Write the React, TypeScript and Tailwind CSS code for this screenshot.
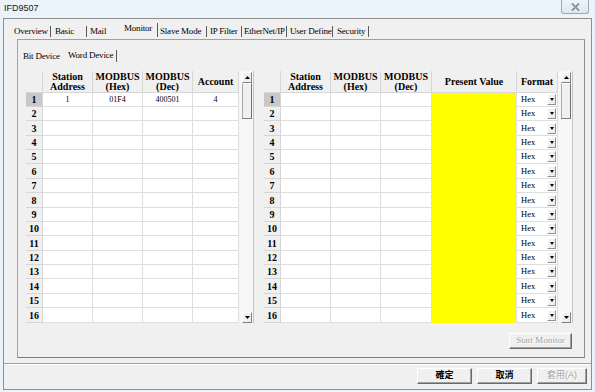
import React from 'react';

const serif = "font-['Liberation_Serif','Times_New_Roman',serif]";
const cjk = "font-['Liberation_Sans','Noto_Sans_CJK_TC',sans-serif]";

type Col = { label: string[]; w: string };

const leftCols: Col[] = [
  { label: ['Station', 'Address'], w: 'w-[50px]' },
  { label: ['MODBUS', '(Hex)'], w: 'w-[50px]' },
  { label: ['MODBUS', '(Dec)'], w: 'w-[50px]' },
  { label: ['Account'], w: 'w-[46px]' },
];

const rightCols: Col[] = [
  { label: ['Station', 'Address'], w: 'w-[50px]' },
  { label: ['MODBUS', '(Hex)'], w: 'w-[50px]' },
  { label: ['MODBUS', '(Dec)'], w: 'w-[51px]' },
  { label: ['Present Value'], w: 'w-[85px]' },
  { label: ['Format'], w: 'w-[41px]' },
];

// 16 rows spread over 230px: mix of 14px and 15px rows
const rows = Array.from({ length: 16 }, (_, i) => ({
  n: i + 1,
  tall: Math.floor((i + 1) * 14.375) - Math.floor(i * 14.375) === 15,
}));

const tabs = [
  { name: 'Overview', w: 'w-[41px]', mr: 'mr-[4px]' },
  { name: 'Basic', w: 'w-[35px]', mr: 'mr-[3px]' },
  { name: 'Mail', w: 'w-[34px]', mr: '' },
  { name: 'Monitor', w: 'w-[36px]', mr: 'mr-[2px]', active: true },
  { name: 'Slave Mode', w: 'w-[50px]', mr: 'mr-[3px]' },
  { name: 'IP Filter', w: 'w-[34px]', mr: 'mr-[2px]' },
  { name: 'EtherNet/IP', w: 'w-[46px]', mr: 'mr-[3px]' },
  { name: 'User Define', w: 'w-[47px]', mr: 'mr-[5px]' },
  { name: 'Security', w: 'w-[35px]', mr: 'mr-[3px]' },
];

function Tri({ down }: { down?: boolean }) {
  return (
    <svg width="5" height="3" viewBox="0 0 5 3">
      <polygon points={down ? '0,0 5,0 2.5,3' : '0,3 5,3 2.5,0'} fill="#000" />
    </svg>
  );
}

function ArrowBtn({ down }: { down?: boolean }) {
  return (
    <div className="w-[10px] h-[11px] bg-[#f0f0f0] border border-t-white border-l-white border-r-[#808080] border-b-[#808080] flex items-center justify-center">
      <Tri down={down} />
    </div>
  );
}

function ScrollBar() {
  return (
    <div className="w-[15px] h-full bg-[#f7f7f7] border-r border-[#c4c4c4] pl-[3px] pt-[1px] flex flex-col">
      <ArrowBtn />
      <div className="w-[10px] h-[36px] bg-[#f0f0f0] border border-t-white border-l-[#a8a8a8] border-r-[#707070] border-b-[#808080]" />
      <div className="flex-1" />
      <ArrowBtn down />
    </div>
  );
}

function Header({ cols }: { cols: Col[] }) {
  return (
    <div className="h-[22px] flex">
      <div className="w-[17px] bg-[#f0f0f0] border-r border-b border-[#d6d6d6]" />
      {cols.map((c, i) => (
        <div
          key={i}
          className={`${c.w} bg-[#f0f0f0] border-r border-b border-[#d6d6d6] flex flex-col items-center justify-center text-[10px] leading-[10px] font-bold text-black ${serif}`}
        >
          {c.label.map((l) => (
            <span key={l} className="whitespace-nowrap">
              {l}
            </span>
          ))}
        </div>
      ))}
    </div>
  );
}

function RowHead({ n }: { n: number }) {
  return (
    <div
      className={`w-[17px] h-full border-r border-b border-[#d6d6d6] flex items-center justify-center text-[10px] font-bold text-black ${serif} ${
        n === 1 ? 'bg-[#c8c8c8]' : 'bg-[#f0f0f0]'
      }`}
    >
      {n}
    </div>
  );
}

function LeftGrid() {
  const first = ['1', '01F4', '400501', '4'];
  return (
    <div className="flex h-[252px]">
      <div className="flex flex-col">
        <Header cols={leftCols} />
        {rows.map(({ n, tall }) => (
          <div key={n} className={`flex ${tall ? 'h-[15px]' : 'h-[14px]'}`}>
            <RowHead n={n} />
            {leftCols.map((c, i) => (
              <div
                key={i}
                className={`${c.w} bg-white border-r border-b border-[#dedede] flex items-center justify-center text-[8px] text-black ${serif}`}
              >
                {n === 1 ? first[i] : ''}
              </div>
            ))}
          </div>
        ))}
      </div>
      <ScrollBar />
    </div>
  );
}

function RightGrid() {
  return (
    <div className="flex h-[252px]">
      <div className="flex flex-col">
        <Header cols={rightCols} />
        {rows.map(({ n, tall }) => (
          <div key={n} className={`flex ${tall ? 'h-[15px]' : 'h-[14px]'}`}>
            <RowHead n={n} />
            <div className="w-[50px] bg-white border-r border-b border-[#dedede]" />
            <div className="w-[50px] bg-white border-r border-b border-[#dedede]" />
            <div className="w-[51px] bg-white border-r border-b border-[#dedede]" />
            <div className="w-[85px] bg-[#ffff00] border-r border-[#dedede]" />
            <div className={`w-[41px] bg-white border-r border-b border-[#dedede] flex items-center pl-[4px] text-[8.5px] text-black ${serif}`}>
              <span className="flex-1">Hex</span>
              <div className="w-[9px] h-[11px] mr-[1px] bg-[#f0f0f0] border border-t-white border-l-white border-r-[#909090] border-b-[#909090] flex items-center justify-center">
                <svg width="4" height="3" viewBox="0 0 4 3">
                  <polygon points="0,0 4,0 2,3" fill="#000" />
                </svg>
              </div>
            </div>
          </div>
        ))}
      </div>
      <ScrollBar />
    </div>
  );
}

function Btn({ children, w, disabled }: { children: React.ReactNode; w: string; disabled?: boolean }) {
  return (
    <div
      className={`${w} h-[16px] bg-[#f0f0f0] border border-t-white border-l-white border-r-[#6a6a6a] border-b-[#6a6a6a] shadow-[inset_-1px_-1px_0_#a0a0a0] flex items-center justify-center ${
        disabled ? 'text-[#a3a3a3] [text-shadow:1px_1px_0_#fff]' : 'text-black'
      }`}
    >
      {children}
    </div>
  );
}

export default function App() {
  return (
    <div className="w-[595px] h-[392px] overflow-hidden bg-[#eaf2fa] flex flex-col">
      {/* Title bar */}
      <div className="h-[18px] flex items-start">
        <span className="ml-[4px] mt-[3px] text-[9px] leading-[10px] text-[#1a1a1a] font-['Liberation_Sans',Arial,sans-serif]">
          IFD9507
        </span>
        <div className="ml-auto mr-[6px] w-[28px] h-[14px] border border-t-0 border-[#9aa8b8] rounded-b-[3px] bg-gradient-to-b from-[#eef3f8] to-[#dfe7f0] flex items-center justify-center">
          <svg width="9" height="8" viewBox="0 0 9 8">
            <path d="M1 0.5 L8 7.5 M8 0.5 L1 7.5" stroke="#5b6775" strokeWidth="1.6" />
            <path d="M1 0.5 L8 7.5 M8 0.5 L1 7.5" stroke="#e8eef4" strokeWidth="0.5" />
          </svg>
        </div>
      </div>

      {/* Dialog frame */}
      <div className="ml-[3px] w-[589px] h-[372px] border border-[#8e8e8e] bg-[#f0f0f0] flex flex-col">
        <div className="h-[345px] border-b border-[#a0a0a0] shadow-[0_1px_0_#fff] flex flex-col">
          {/* Main tabs */}
          <div className={`h-[20px] flex items-start pl-[10px] text-[9px] leading-[10px] text-black ${serif}`}>
            {tabs.map((t) => (
              <div key={t.name} className={`${t.w} flex items-start ${t.active ? 'pt-[4px]' : 'pt-[7px]'}`}>
                <span className="whitespace-nowrap tracking-[-0.2px]">{t.name}</span>
                {t.mr && (
                  <span className={`ml-auto ${t.mr} w-px bg-[#5a5a5a] ${t.active ? 'h-[14px]' : 'h-[11px]'}`} />
                )}
              </div>
            ))}
          </div>

          {/* Monitor page */}
          <div className="ml-[13px] w-[568px] h-[319px] border border-[#a0a0a0] border-b-[#7c7c7c] border-r-[#8c8c8c] flex flex-col">
            {/* Sub tabs */}
            <div className={`h-[31px] flex items-start pl-[5px] pt-[11px] text-[9px] leading-[10px] text-black ${serif}`}>
              <span className="w-[45px] whitespace-nowrap tracking-[-0.2px]">Bit Device</span>
              <div className="w-[50px] flex items-start -mt-[1px]">
                <span className="whitespace-nowrap tracking-[-0.2px]">Word Device</span>
                <span className="ml-auto mr-[1px] w-px h-[12px] bg-[#5a5a5a]" />
              </div>
            </div>

            <div className="pl-[8px] flex flex-col">
              <div className="flex gap-[10px]">
                <LeftGrid />
                <RightGrid />
              </div>
              <div className="w-[547px] flex justify-end mt-[10px]">
                <div className={`mr-[1px] text-[9px] ${serif}`}>
                  <Btn w="w-[63px]" disabled>
                    Start Monitor
                  </Btn>
                </div>
              </div>
            </div>
          </div>
        </div>

        {/* Dialog buttons */}
        <div className={`flex justify-end gap-[5px] pt-[4px] pr-[4px] text-[9px] ${cjk}`}>
          <Btn w="w-[55px]">
            <span className="font-bold">確定</span>
          </Btn>
          <Btn w="w-[55px]">
            <span className="font-bold">取消</span>
          </Btn>
          <Btn w="w-[50px]" disabled>
            套用(A)
          </Btn>
        </div>
      </div>
    </div>
  );
}
